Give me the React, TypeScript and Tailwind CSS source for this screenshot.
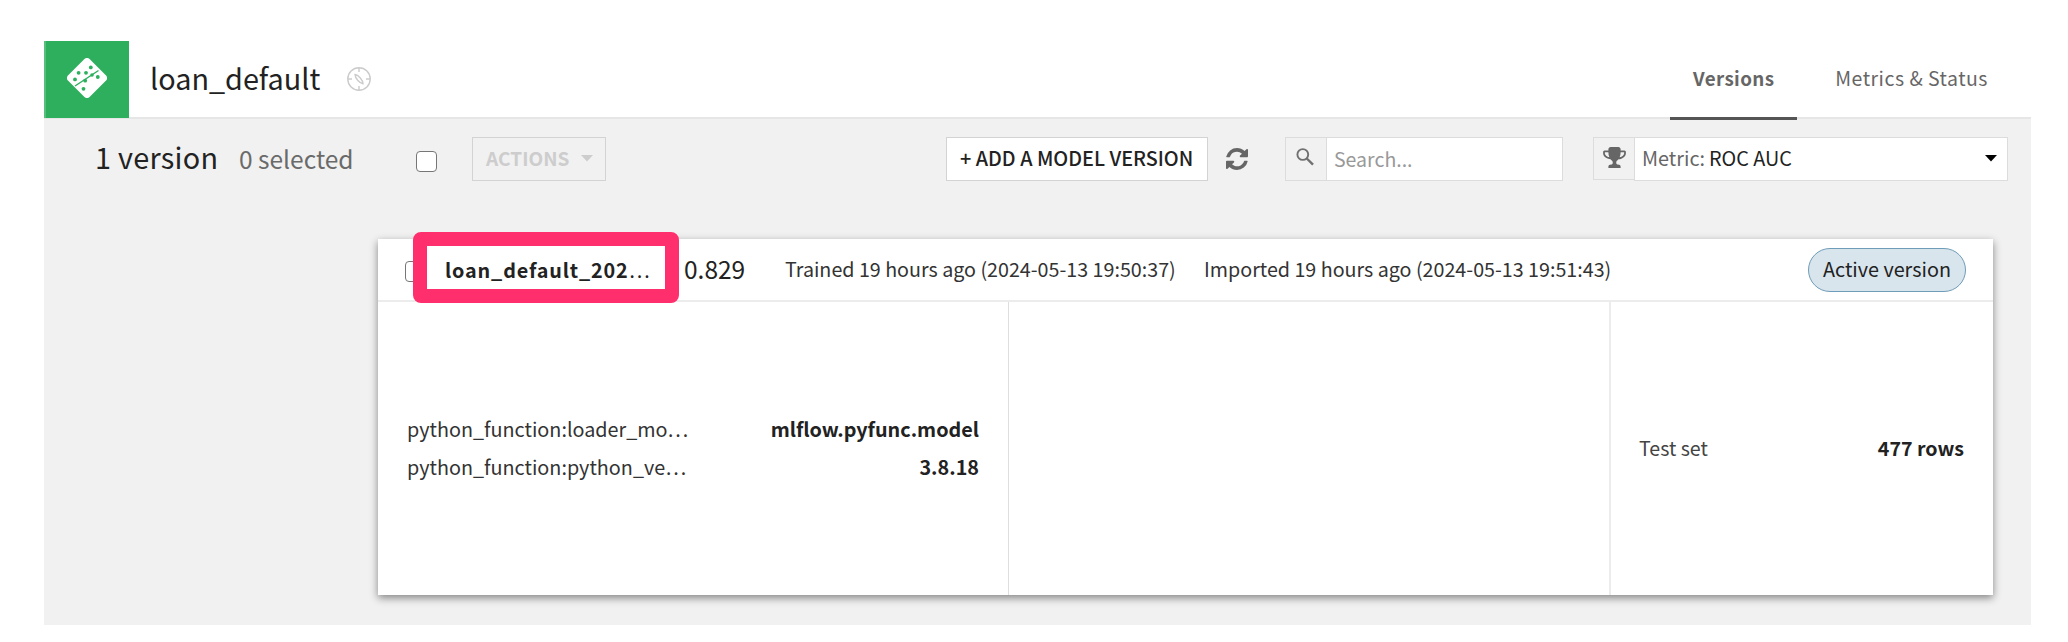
import React from "react";

const Caret = ({ className }: { className: string }) => (
  <svg viewBox="0 0 12 7" className={className} fill="currentColor">
    <path d="M0 0h12L6 6.5z" />
  </svg>
);

const DominoIcon = () => (
  <svg viewBox="0 0 40 40" className="h-10 w-10">
    <path d="M17.2 1.2a4 4 0 0 1 5.600 0L38.800 17.200a4 4 0 0 1 0 5.600L22.800 38.800a4 4 0 0 1-5.600 0L1.200 22.800a4 4 0 0 1 0-5.600z" fill="#fff" />
    <path d="M8 28 31.500 12.500" stroke="#2daf5d" strokeWidth="1.400" />
    <g fill="#2daf5d">
      <circle cx="23.800" cy="9.400" r="1.900" />
      <circle cx="11.600" cy="14.800" r="1.900" />
      <circle cx="19" cy="14.800" r="1.900" />
      <circle cx="8" cy="21.400" r="1.900" />
      <circle cx="25" cy="17" r="1.800" />
      <circle cx="18.200" cy="22.700" r="1.900" />
      <circle cx="30.800" cy="19" r="1.900" />
      <circle cx="16.500" cy="30.800" r="1.900" />
    </g>
  </svg>
);

const CompassIcon = () => (
  <svg viewBox="0 0 24 24" className="h-6 w-6" fill="none" stroke="#cbcbcb" strokeWidth="1.400">
    <circle cx="12" cy="12" r="11.200" />
    <path d="M12 1v4M12 19v4M1 12h4M19 12h4" />
    <path d="M8 7.500c3.200.3 7.800 5.200 8 9.300-3.200-.3-7.800-5.200-8-9.300z" />
  </svg>
);

const RefreshIcon = () => (
  <svg viewBox="0 0 1536 1536" className="h-[22px] w-[22px]" fill="#666">
    <path d="M1511 928q0 5-1 7-64 268-268 434.500T764 1536q-146 0-282.500-55T238 1324l-129 129q-19 19-45 19t-45-19-19-45V960q0-26 19-45t45-19h448q26 0 45 19t19 45-19 45l-137 137q71 66 161 102t187 36q134 0 250-65t186-179q11-17 53-117 8-23 30-23h192q13 0 22.500 9.500t9.500 22.500zm25-800v448q0 26-19 45t-45 19h-448q-26 0-45-19t-19-45 19-45l138-138Q969 256 768 256q-134 0-250 65T332 500q-11 17-53 117-8 23-30 23H50q-13 0-22.500-9.500T18 608v-7q65-268 270-434.500T768 0q146 0 284 55.500T1297 212l130-129q19-19 45-19t45 19 19 45z" />
  </svg>
);

const SearchIcon = () => (
  <svg viewBox="0 0 18 18" className="h-[18px] w-[18px]" fill="none" stroke="#707070">
    <circle cx="6.800" cy="6.500" r="5.400" strokeWidth="1.900" />
    <path d="M10.800 10.500 17 16.700" strokeWidth="2.400" />
  </svg>
);

const TrophyIcon = () => (
  <svg viewBox="0 0 1664 1536" className="h-[21px] w-[23px]" fill="#666">
    <path d="M458 755q-74-162-74-371H128v96q0 78 94.500 162T458 755zm1078-275v-96h-256q0 209-74 371 141-29 235.500-113t94.500-162zm128-128v128q0 71-41.500 143t-112 130-173 97.500T1122 893q-42 54-95 95-38 34-52.500 72.500T960 1152q0 54 30.500 91t97.500 37q75 0 133.500 45.500T1280 1440v64q0 14-9 23t-23 9H416q-14 0-23-9t-9-23v-64q0-69 58.500-114.500T576 1280q67 0 97.500-37t30.500-91q0-53-14.500-91.500T637 988q-53-41-95-95-113-5-215.500-44.500t-173-97.500-112-130T0 480V352q0-40 28-68t68-28h288v-96q0-66 47-113T544 0h576q66 0 113 47t47 113v96h288q40 0 68 28t28 68z" />
  </svg>
);

const Checkbox = ({ className }: { className: string }) => (
  <span className={`box-border block h-[21px] w-[21px] shrink-0 rounded-[4px] border-[1.500px] border-[#767676] bg-white ${className}`} />
);

const params = [
  { name: "python_function:loader_mo…", value: "mlflow.pyfunc.model" },
  { name: "python_function:python_ve…", value: "3.8.18" },
];

export default function App() {
  return (
    <div className="h-[642px] w-[2068px] overflow-hidden bg-white pt-[41px] pl-[44px] font-['Noto_Sans_CJK_SC',sans-serif] text-[19.800px] leading-[20px] text-[#222]">
      <div className="flex h-[584px] w-[1987px] flex-col bg-[#f1f1f1] whitespace-nowrap">
        <header className="flex h-[78px] shrink-0 items-start border-b-2 border-[#e6e6e6] bg-white">
          <div className="flex h-[77px] w-[85px] items-center justify-center border-l-2 border-[#57bf7d] bg-[#2daf5d] pr-[1px] pb-[3px]">
            <DominoIcon />
          </div>
          <h1 className="mt-[22px] ml-[21px] text-[28.800px] leading-[30px]">loan_default</h1>
          <div className="mt-[26px] ml-[27px]"><CompassIcon /></div>
          <nav className="ml-auto flex items-start text-[#666]">
            <a className="flex h-[79px] w-[127px] justify-center border-b-[3px] border-[#555] pt-[27px] text-[18.800px] font-bold tracking-[0.400px]">Versions</a>
            <a className="mr-[43px] ml-[38px] pt-[27px] text-[19.500px] tracking-[0.500px]">Metrics &amp; Status</a>
          </nav>
        </header>

        <div className="flex h-[120px] shrink-0 items-start pt-[18px]">
          <div className="mt-[5px] ml-[51px] w-[144px] text-[28.800px] leading-[30px] tracking-[0.300px]">1 version</div>
          <div className="mt-[9px] w-[177px] text-[24.500px] leading-[26px] text-[#6a6a6a]">0 selected</div>
          <Checkbox className="mt-[14px]" />
          <button className="ml-[35px] flex h-[44px] w-[134px] items-start border-[1.500px] border-[#d3d3d3] pt-[10px] pl-[13px] text-[19.100px] font-bold text-[#cdcdcd]">
            ACTIONS
            <Caret className="mt-[7px] ml-[12px] h-[7px] w-[12px]" />
          </button>
          <button className="ml-[340px] flex h-[44px] w-[262px] items-start border border-[#d3d3d3] bg-white pt-[10px] pl-[13px] font-medium">+ ADD A MODEL VERSION</button>
          <div className="mt-[11px] ml-[18px]"><RefreshIcon /></div>
          <div className="ml-[37px] flex h-[44px] w-[278px] border border-[#dcdcdc] bg-white">
            <div className="flex w-[41px] justify-center border-r border-[#dcdcdc] bg-[#f1f1f1] pt-[10px] pr-[2px]"><SearchIcon /></div>
            <div className="pt-[11px] pl-[7px] text-[19.500px] text-[#999]">Search...</div>
          </div>
          <div className="ml-[30px] flex h-[44px] w-[415px]">
            <div className="flex h-[43px] w-[41px] justify-center border border-r-0 border-[#dcdcdc] pt-[9px]"><TrophyIcon /></div>
            <div className="flex flex-1 items-start border border-[#dcdcdc] bg-white pt-[10px] pl-[7px]">
              <span className="text-[#666]">Metric:</span>
              <span className="ml-[4px]">ROC AUC</span>
              <Caret className="mt-[7px] mr-[10px] ml-auto h-[7px] w-[12px] text-black" />
            </div>
          </div>
        </div>

        <section className="relative ml-[334px] flex h-[356px] w-[1615px] flex-col bg-white shadow-[0_3px_8px_rgba(0,0,0,0.450)]">
          <div className="flex h-[63px] items-start border-b-2 border-[#ececec]">
            <Checkbox className="mt-[22px] ml-[27px]" />
            <div className="mt-[21px] ml-[19px] w-[239px] font-bold tracking-[0.850px]">loan_default_202<span className="font-normal tracking-normal">…</span></div>
            <div className="mt-[17px] w-[101px] text-[24.500px] leading-[26px]">0.829</div>
            <div className="mt-[20px] w-[419px] text-[19.700px] text-[#333]">Trained 19 hours ago (2024-05-13 19:50:37)</div>
            <div className="mt-[20px] text-[19.700px] text-[#333]">Imported 19 hours ago (2024-05-13 19:51:43)</div>
            <div className="mt-[9px] mr-[27px] ml-auto flex h-[44px] w-[158px] justify-center rounded-full border-[1.500px] border-[#6f9cb8] bg-[#d9e5ed] pt-[10px]">Active version</div>
          </div>
          <div className="flex flex-1">
            <div className="flex w-[631px] flex-col gap-[18px] border-r border-[#dedede] pt-[117px] pr-[29px] pl-[29px]">
              {params.map((p) => (
                <div key={p.name} className="flex justify-between">
                  <span className="text-[#333]">{p.name}</span>
                  <span className="font-bold">{p.value}</span>
                </div>
              ))}
            </div>
            <div className="w-[602px] border-r-2 border-[#ececec]" />
            <div className="flex flex-1 items-start justify-between pt-[136px] pr-[29px] pl-[28px] text-[19.600px]">
              <span className="text-[#444]">Test set</span>
              <span className="font-bold">477 rows</span>
            </div>
          </div>
          <div className="absolute top-[-7px] left-[35px] h-[71px] w-[266px] rounded-[8px] border-[14.500px] border-[#ff2e6c]" />
        </section>
      </div>
    </div>
  );
}
